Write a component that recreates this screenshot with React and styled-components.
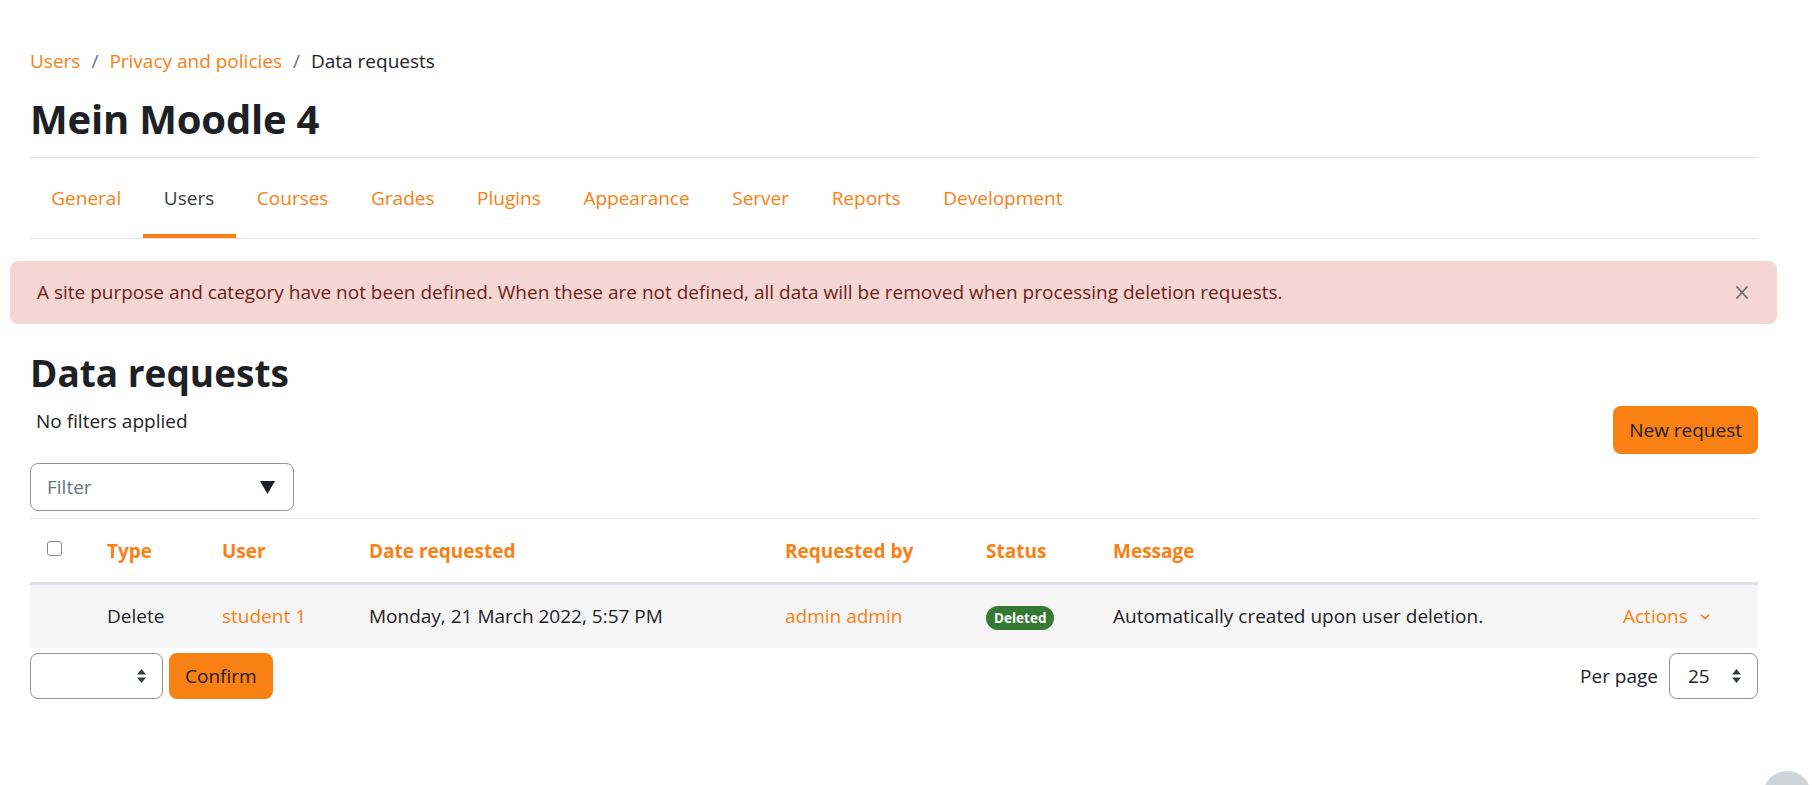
import styled, { createGlobalStyle } from 'styled-components';
import { ChevronDown } from 'lucide-react';

const GlobalStyle = createGlobalStyle`
  body {
    margin: 0;
    background: #fff;
    color: #1d2125;
    font-family: 'Open Sans', 'Noto Sans', sans-serif;
    font-size: 19px;
    line-height: 27px;
  }
  * {
    box-sizing: border-box;
  }
`;

const orange = '#f98012';

const Page = styled.div`
  padding: 48px 54px 0 30px;
`;

const Breadcrumb = styled.nav`
  display: flex;
  align-items: center;
  gap: 11px;
  height: 26px;

  a {
    color: ${orange};
    text-decoration: none;
  }
  span.sep {
    color: #6a737b;
  }
`;

const PageHeader = styled.header`
  padding: 22px 0 15px;
  border-bottom: 1px solid #dee2e6;
`;

const Title = styled.h1`
  margin: 0;
  font-size: 40px;
  line-height: 46px;
  font-weight: 700;
  letter-spacing: -0.2px;
`;

const Tabs = styled.ul`
  display: flex;
  margin: 0;
  padding: 0;
  list-style: none;
  border-bottom: 1px solid #dee2e6;
`;

const Tab = styled.li`
  height: 80px;
  padding: 4px 21.3px 0;
  display: flex;
  align-items: center;
  color: ${(p) => (p.$active ? '#343a40' : orange)};
  border-bottom: 4px solid ${(p) => (p.$active ? orange : 'transparent')};
`;

const Alert = styled.div`
  margin: 22px -19px 0 -20px;
  height: 63px;
  padding: 0 27px;
  display: flex;
  align-items: center;
  justify-content: space-between;
  background: #f4d6d2;
  color: #6e211a;
  border-radius: 8px;
`;

const CloseButton = styled.span`
  display: flex;
  align-items: center;
  margin-right: 2px;
`;

const Heading = styled.h2`
  margin: 29px 0 13px;
  font-size: 37px;
  line-height: 40px;
  font-weight: 700;
`;

const FilterRow = styled.div`
  display: flex;
  justify-content: space-between;
  align-items: flex-start;
`;

const FilterColumn = styled.div`
  display: flex;
  flex-direction: column;
`;

const FilterNote = styled.div`
  padding: 2px 0 0 6px;
`;

const FilterSelect = styled.div`
  margin-top: 28px;
  width: 264px;
  height: 48px;
  border: 1px solid #8f959e;
  border-radius: 8px;
  padding: 0 18px 0 16px;
  display: flex;
  align-items: center;
  justify-content: space-between;
  color: #6a737b;
`;

const Button = styled.button`
  font: inherit;
  color: #1d2125;
  background: ${orange};
  border: none;
  border-radius: 8px;
  height: ${(p) => p.$h || 48}px;
  padding: 0 ${(p) => p.$px || 16}px;
  cursor: pointer;
`;

const Table = styled.table`
  width: 100%;
  margin-top: 7px;
  border-collapse: collapse;
  table-layout: fixed;
`;

const Th = styled.th`
  text-align: left;
  font-weight: 700;
  color: ${orange};
  padding: 19px 15px 17px;
  border-top: 1px solid #dee2e6;
  border-bottom: 3px solid #dee2e6;
  vertical-align: middle;
`;

const Row = styled.tr`
  background: #f5f5f5;
`;

const Td = styled.td`
  padding: 18px 15px;
  vertical-align: middle;
  color: ${(p) => (p.$link ? orange : '#1d2125')};
`;

const Checkbox = styled.span`
  display: inline-block;
  width: 15px;
  height: 15px;
  margin-left: 2px;
  border: 1px solid #8a8a8a;
  border-radius: 3px;
  vertical-align: middle;
  position: relative;
  top: -4px;
`;

const Badge = styled.span`
  display: inline-block;
  height: 24px;
  line-height: 24px;
  padding: 0 8px;
  border-radius: 12px;
  background: #357a32;
  color: #fff;
  font-size: 13.5px;
  font-weight: 700;
  vertical-align: middle;
`;

const Actions = styled.span`
  display: inline-flex;
  align-items: center;
  gap: 10px;
  color: ${orange};
  margin-left: 2px;
`;

const Footer = styled.div`
  margin-top: 5px;
  display: flex;
  justify-content: space-between;
  align-items: center;
`;

const Group = styled.div`
  display: flex;
  align-items: center;
  gap: ${(p) => p.$gap || 6}px;
`;

const SmallSelect = styled.div`
  width: ${(p) => p.$w}px;
  height: 46px;
  border: 1px solid #8f959e;
  border-radius: 8px;
  display: flex;
  align-items: center;
  justify-content: space-between;
  padding: 0 16px 0 18px;
`;

const HelpBubble = styled.div`
  position: fixed;
  right: 1px;
  bottom: -34px;
  width: 48px;
  height: 48px;
  border-radius: 50%;
  background: #ced4da;
`;

const SortIcon = () => (
  <svg width='9' height='14' viewBox='0 0 9 14'>
    <path d='M4.5 0 L9 5.5 H0 Z' fill='#343a40' />
    <path d='M4.5 14 L9 8.5 H0 Z' fill='#343a40' />
  </svg>
);

const columns = [
  { w: 62, label: '' },
  { w: 115, label: 'Type' },
  { w: 147, label: 'User' },
  { w: 416, label: 'Date requested' },
  { w: 201, label: 'Requested by' },
  { w: 127, label: 'Status' },
  { w: 508, label: 'Message' },
  { w: 152, label: '' },
];

const tabs = [
  'General',
  'Users',
  'Courses',
  'Grades',
  'Plugins',
  'Appearance',
  'Server',
  'Reports',
  'Development',
];

const App = () => {
  return (
    <>
      <GlobalStyle />
      <Page>
        <Breadcrumb>
          <a href='#'>Users</a>
          <span className='sep'>/</span>
          <a href='#'>Privacy and policies</a>
          <span className='sep'>/</span>
          <span>Data requests</span>
        </Breadcrumb>
        <PageHeader>
          <Title>Mein Moodle 4</Title>
        </PageHeader>

        <Tabs>
          {tabs.map((t) => (
            <Tab key={t} $active={t === 'Users'}>
              {t}
            </Tab>
          ))}
        </Tabs>

        <Alert>
          <span>
            A site purpose and category have not been defined. When these are
            not defined, all data will be removed when processing deletion
            requests.
          </span>
          <CloseButton>
            <svg width='12' height='13' viewBox='0 0 12 13'>
              <path
                d='M1 1 L11 12 M11 1 L1 12'
                stroke='#6b6b6b'
                strokeWidth='1.8'
                strokeLinecap='round'
              />
            </svg>
          </CloseButton>
        </Alert>

        <Heading>Data requests</Heading>

        <FilterRow>
          <FilterColumn>
            <FilterNote>No filters applied</FilterNote>
            <FilterSelect>
              Filter
              <svg width='15' height='13' viewBox='0 0 15 13'>
                <path d='M0 0 H15 L7.5 13 Z' fill='#1d2125' />
              </svg>
            </FilterSelect>
          </FilterColumn>
          <Button>New request</Button>
        </FilterRow>

        <Table>
          <colgroup>
            {columns.map((c, i) => (
              <col key={i} style={{ width: c.w }} />
            ))}
          </colgroup>
          <thead>
            <tr>
              <Th>
                <Checkbox />
              </Th>
              {columns.slice(1).map((c, i) => (
                <Th key={i}>{c.label}</Th>
              ))}
            </tr>
          </thead>
          <tbody>
            <Row>
              <Td></Td>
              <Td>Delete</Td>
              <Td $link>student 1</Td>
              <Td>Monday, 21 March 2022, 5:57 PM</Td>
              <Td $link>admin admin</Td>
              <Td>
                <Badge>Deleted</Badge>
              </Td>
              <Td>Automatically created upon user deletion.</Td>
              <Td>
                <Actions>
                  Actions
                  <ChevronDown size={14} strokeWidth={3} />
                </Actions>
              </Td>
            </Row>
          </tbody>
        </Table>

        <Footer>
          <Group>
            <SmallSelect $w={133}>
              <span></span>
              <SortIcon />
            </SmallSelect>
            <Button $h={46} $px={16}>
              Confirm
            </Button>
          </Group>
          <Group $gap={11}>
            <span>Per page</span>
            <SmallSelect $w={89}>
              <span>25</span>
              <SortIcon />
            </SmallSelect>
          </Group>
        </Footer>
      </Page>
      <HelpBubble />
    </>
  );
};

export default App;
